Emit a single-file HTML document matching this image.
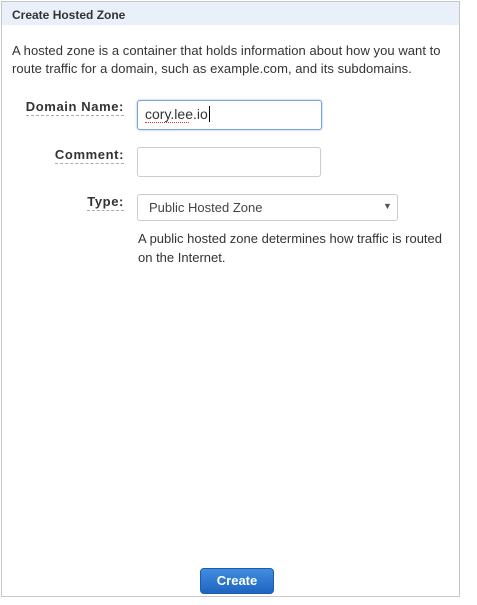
<!DOCTYPE html>
<html><head><style>
body{margin:0;width:477px;height:605px;background:#fff;font-family:"Liberation Sans",Arial,sans-serif;position:relative;overflow:hidden}
.panel{position:absolute;left:1px;top:1px;width:457px;height:594px;border:1px solid #c6c6c6;}
.hdr{height:23px;background:#e9f0fa;font-weight:bold;font-size:12px;color:#333;padding-left:10px;line-height:26px}
.intro{position:absolute;left:10px;top:40px;font-size:13px;color:#333;line-height:18px;letter-spacing:0.05px}
.lbl{position:absolute;right:353px;font-weight:bold;font-size:13px;color:#333;border-bottom:1px dashed #aaa;line-height:16px;letter-spacing:0.6px}
.inp{position:absolute;left:137px;width:182px;height:28px;border:1px solid #ccc;border-radius:3px;background:#fff;box-sizing:border-box}
.t{position:absolute;font-size:13px;color:#444}
</style></head><body>
<div class="panel">
<div class="hdr">Create Hosted Zone</div>
<div class="intro">A hosted zone is a container that holds information about how you want to<br>route traffic for a domain, such as example.com, and its subdomains.</div>
</div>
<div class="lbl" style="top:99px">Domain Name:</div>
<div class="inp" style="top:100px;border:1px solid #7aa3d8;box-shadow:0 0 2px #9bbbe6;height:30px;width:185px;left:137px"></div>
<div class="t" style="left:145px;top:106px;font-size:14px;color:#333">cory.lee.io<span style="border-left:1px solid #000;margin-left:1px"></span></div>
<div style="position:absolute;left:145px;top:122px;width:44px;border-bottom:1px dotted #d33"></div>
<div class="lbl" style="top:147px">Comment:</div>
<div class="inp" style="top:147px;width:184px;height:30px"></div>
<div class="lbl" style="top:194px">Type:</div>
<div class="inp" style="top:194px;width:261px;height:27px"></div>
<div class="t" style="left:149px;top:200px;font-size:13px">Public Hosted Zone</div>
<div class="t" style="left:383px;top:201px;font-size:9px;color:#555">▼</div>
<div class="t" style="left:138px;top:229px;line-height:19px;color:#333">A public hosted zone determines how traffic is routed<br>on the Internet.</div>
<div style="position:absolute;left:200px;top:568px;width:74px;height:26px;border-radius:4px;background:linear-gradient(#3f8ee0,#1f64c0);border:1px solid #1d5aaa;box-sizing:border-box;color:#fff;font-weight:bold;font-size:13px;text-align:center;line-height:24px">Create</div>
</body></html>
